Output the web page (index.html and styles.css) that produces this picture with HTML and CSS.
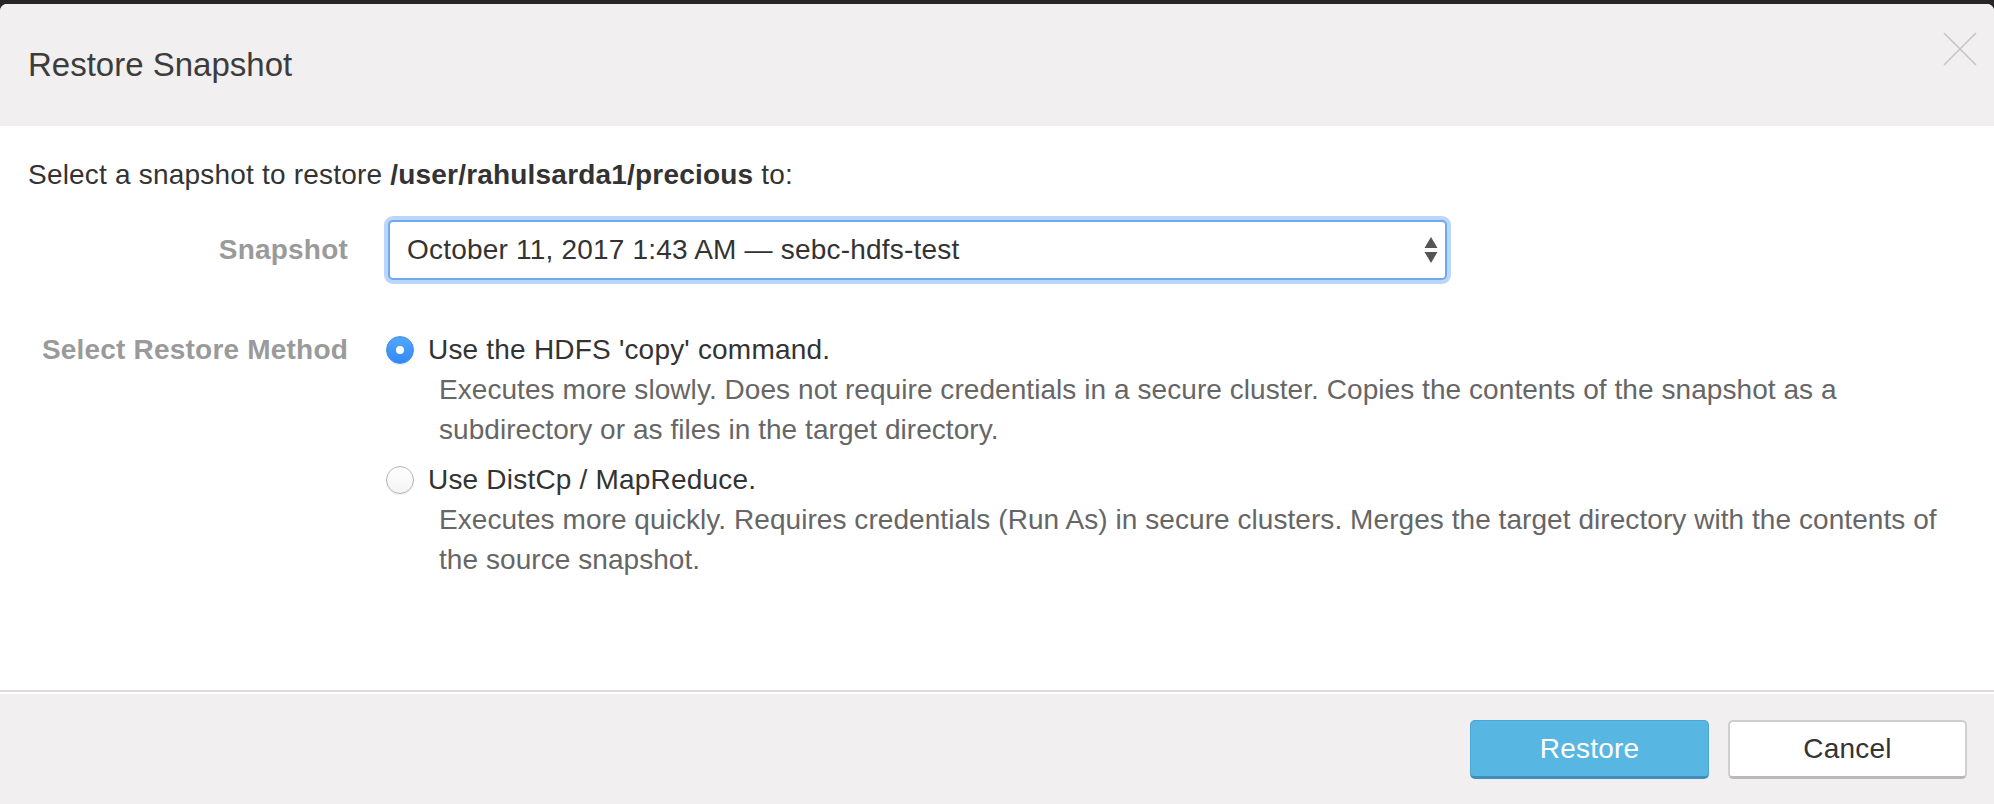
FILE: index.html
```html
<!DOCTYPE html>
<html lang="en">
<head>
<meta charset="utf-8">
<title>Restore Snapshot</title>
<link rel="stylesheet" href="styles.css">
</head>
<body>
<div class="modal">
  <header class="modal-header">
    <h1 class="modal-title">Restore Snapshot</h1>
    <button class="close" aria-label="Close">
      <svg width="34" height="34" viewBox="0 0 34 34"><path d="M1 1 L33 33 M33 1 L1 33" stroke="#c6c6c6" stroke-width="1.6" fill="none"/></svg>
    </button>
  </header>
  <main class="modal-body">
    <p class="intro">Select a snapshot to restore <strong>/user/rahulsarda1/precious</strong> to:</p>
    <div class="form">
      <label class="form-label snap-label">Snapshot</label>
      <div class="select">
        <span class="select-text">October 11, 2017 1:43 AM — sebc-hdfs-test</span>
        <svg class="select-arrows" width="14" height="28" viewBox="0 0 14 28"><path d="M7 0 L13.5 11 L0.5 11 Z M0.5 15 L13.5 15 L7 26 Z" fill="#555"/></svg>
      </div>
      <label class="form-label method-label">Select Restore Method</label>
      <div class="options">
        <div class="option">
          <div class="option-row"><span class="radio checked"></span><span class="option-title">Use the HDFS 'copy' command.</span></div>
          <p class="option-desc">Executes more slowly. Does not require credentials in a secure cluster. Copies the contents of the snapshot as a subdirectory or as files in the target directory.</p>
        </div>
        <div class="option">
          <div class="option-row"><span class="radio"></span><span class="option-title">Use DistCp / MapReduce.</span></div>
          <p class="option-desc">Executes more quickly. Requires credentials (Run As) in secure clusters. Merges the target directory with the contents of the source snapshot.</p>
        </div>
      </div>
    </div>
  </main>
  <footer class="modal-footer">
    <button class="btn btn-primary">Restore</button>
    <button class="btn btn-default">Cancel</button>
  </footer>
</div>
</body>
</html>
```

FILE: styles.css
```css
* { box-sizing: border-box; }
html, body { margin: 0; padding: 0; height: 100%; }
body {
  background: #262626;
  font-family: "Liberation Sans", Arial, Helvetica, sans-serif;
  font-size: 28px;
  letter-spacing: 0.2px;
  color: #333;
  padding-top: 4px;
  overflow: hidden;
}
.modal {
  height: 800px;
  background: #fff;
  border-radius: 7px 7px 0 0;
  display: flex;
  flex-direction: column;
  overflow: hidden;
}
.modal-header {
  height: 122px;
  background: #f1eff0;
  display: flex;
  justify-content: space-between;
  align-items: center;
  padding: 0 17px 0 28px;
}
.modal-title {
  margin: 0;
  font-size: 33px;
  font-weight: normal;
  letter-spacing: 0;
  color: #3c3c3c;
  line-height: 40px;
}
.close {
  align-self: flex-start;
  margin-top: 28px;
  background: none;
  border: 0;
  padding: 0;
  width: 34px;
  height: 34px;
}
.close svg { display: block; }
.modal-body {
  flex: 1;
  padding: 29px 30px 0 28px;
}
.intro {
  margin: 0 0 25px;
  line-height: 40px;
}
.intro strong { font-weight: bold; color: #333; }
.form {
  display: grid;
  grid-template-columns: 320px 1fr;
  column-gap: 40px;
  row-gap: 50px;
  align-items: start;
}
.form-label {
  text-align: right;
  font-weight: bold;
  color: #9a9a9a;
  line-height: 40px;
}
.snap-label { align-self: center; }
.select {
  width: 1059px;
  height: 60px;
  border: 2px solid #6ea8ee;
  border-radius: 5px;
  box-shadow: 0 0 0 4px rgba(140, 188, 248, 0.6);
  display: flex;
  align-items: center;
  justify-content: space-between;
  padding: 0 7px 0 17px;
  background: #fff;
}
.select-text { color: #333; line-height: 40px; }
.select-arrows { display: block; margin-top: 2px; }
.options { display: flex; flex-direction: column; gap: 10px; }
.option-row {
  display: flex;
  align-items: center;
  height: 40px;
  margin-left: -2px;
}
.radio {
  width: 28px;
  height: 28px;
  border-radius: 50%;
  border: 1px solid #b4b4b4;
  background: linear-gradient(#fff, #f4f4f4);
  box-shadow: 0 1px 1px rgba(0,0,0,0.08);
  flex: none;
  display: flex;
  align-items: center;
  justify-content: center;
}
.radio.checked {
  border-color: #3a8ff5;
  background: linear-gradient(#55a6fb, #3389f4);
}
.radio.checked::after {
  content: "";
  width: 8px;
  height: 8px;
  border-radius: 50%;
  background: #fff;
}
.option-title {
  margin-left: 14px;
  color: #333;
  line-height: 40px;
}
.option-desc {
  margin: 0 0 0 51px;
  color: #666;
  line-height: 40px;
  letter-spacing: 0.06px;
}
.modal-footer {
  background: #f1eff0;
  border-top: 2px solid #dcdcdc;
  box-shadow: inset 0 2px 0 #fff;
  display: flex;
  justify-content: flex-end;
  gap: 19px;
  padding: 28px 27px 0 0;
  height: 114px;
}
.btn {
  width: 239px;
  height: 59px;
  font-family: inherit;
  font-size: 28px;
  letter-spacing: 0.2px;
  border-radius: 5px;
  padding: 0;
}
.btn-primary {
  background: #58b6e2;
  color: #fff;
  border: 1px solid #4aa6d3;
  border-bottom: 3px solid #3f8fba;
}
.btn-default {
  background: #fff;
  color: #333;
  border: 2px solid #cfcfcf;
  border-bottom: 3px solid #b9b9b9;
}
```
